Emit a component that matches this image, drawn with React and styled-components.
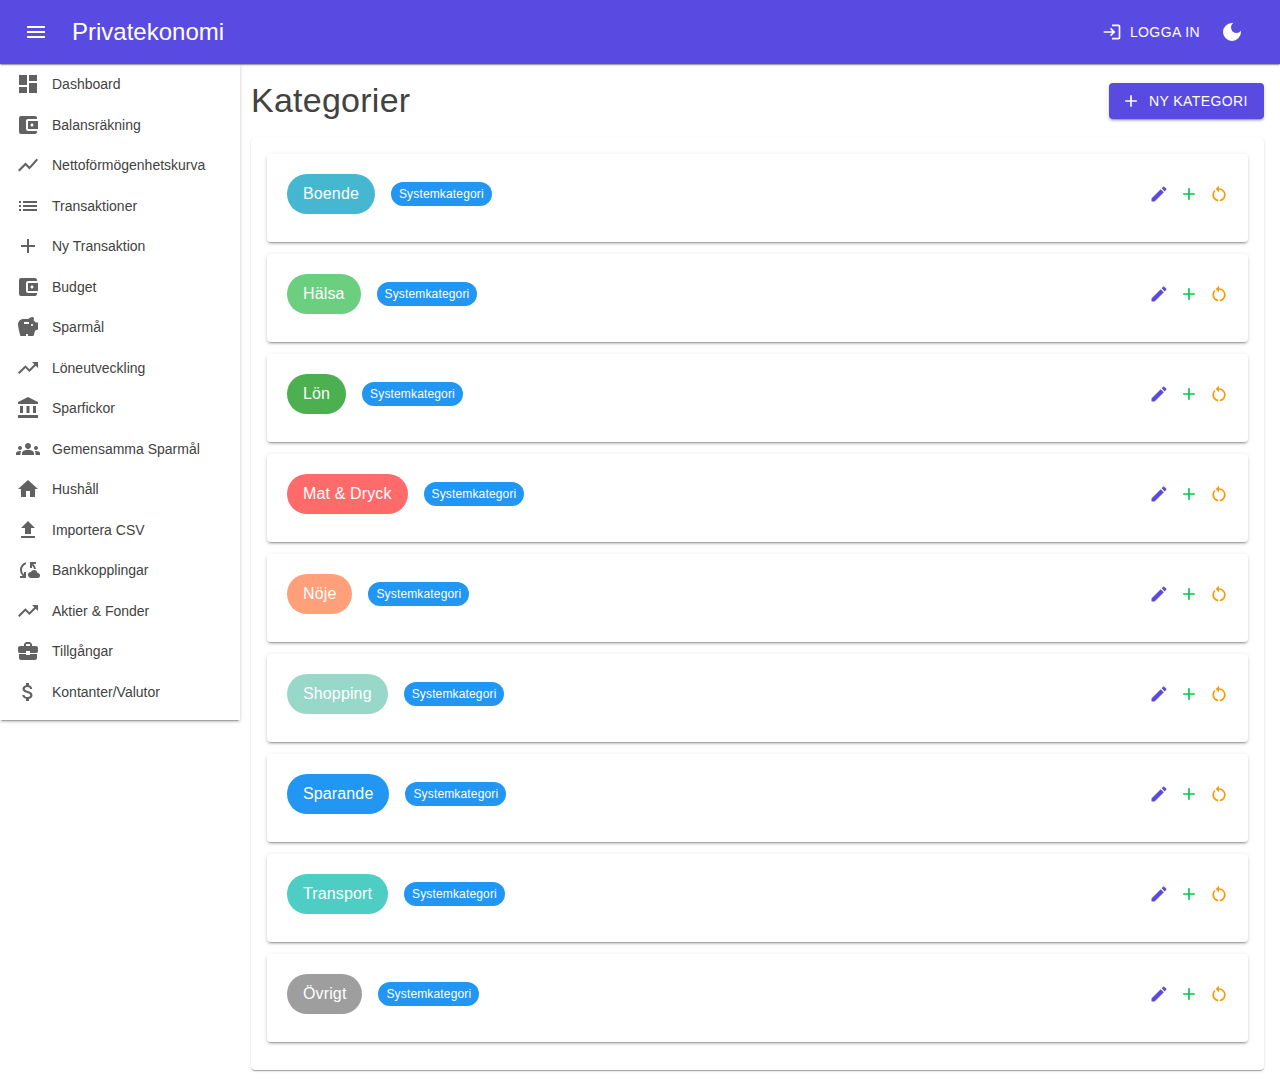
import React from "react";
import styled, { createGlobalStyle } from "styled-components";
import {
  MdMenu, MdDashboard, MdAccountBalanceWallet, MdShowChart, MdList, MdAdd, MdSavings,
  MdTrendingUp, MdAccountBalance, MdGroups, MdHome, MdFileUpload, MdCloudSync,
  MdBusinessCenter, MdAttachMoney, MdLogin, MdDarkMode, MdEdit, MdRestartAlt,
} from "react-icons/md";

const Global = createGlobalStyle`
  html, body { margin: 0; padding: 0; background: #fff; }
  body { font-family: "Liberation Sans", Arial, sans-serif; color: #424242; }
  * { box-sizing: border-box; }
`;

const AppBar = styled.header`
  position: relative;
  z-index: 5;
  height: 64px;
  background: #594ae2;
  color: #fff;
  display: flex;
  align-items: center;
  padding: 0 36px 0 24px;
  box-shadow: 0 2px 1px -1px rgba(0,0,0,.2), 0 1px 1px rgba(0,0,0,.14), 0 1px 3px rgba(0,0,0,.12);
`;
const MenuBtn = styled.span`
  display: flex;
  font-size: 24px;
  margin-right: 24px;
`;
const Brand = styled.div`
  font-size: 24px;
  line-height: 32px;
  flex: 1;
`;
const Login = styled.div`
  display: flex;
  align-items: center;
  gap: 8px;
  font-size: 14px;
  letter-spacing: .4px;
  margin-right: 20px;
`;
const Shell = styled.div`
  display: flex;
  align-items: flex-start;
`;
const Drawer = styled.nav`
  width: 240px;
  flex: none;
  padding-bottom: 8px;
  background: #fff;
  box-shadow: 0 3px 1px -2px rgba(0,0,0,.2), 0 2px 2px rgba(0,0,0,.14), 0 1px 5px rgba(0,0,0,.12);
`;
const NavItem = styled.div`
  display: flex;
  align-items: center;
  gap: 12px;
  padding: 8px 16px;
  font-size: 14px;
  line-height: 24.5px;
  color: #424242;
  svg { flex: none; font-size: 24px; color: #616161; }
`;
const Main = styled.main`
  flex: 1;
  min-width: 0;
  padding: 0 16px 16px 11px;
`;
const Head = styled.div`
  display: flex;
  align-items: flex-start;
  justify-content: space-between;
  padding-top: 19px;
  margin-bottom: 19px;
`;
const Title = styled.h1`
  margin: 0;
  font-size: 34px;
  font-weight: 400;
  line-height: 34px;
  letter-spacing: .25px;
  color: #424242;
`;
const NewBtn = styled.button`
  display: flex;
  align-items: center;
  height: 36px;
  width: 155px;
  gap: 8px;
  padding: 0 12px;
  border: 0;
  border-radius: 4px;
  background: #594ae2;
  color: #fff;
  font-family: "Liberation Sans", Arial, sans-serif;
  font-size: 14px;
  letter-spacing: .4px;
  white-space: nowrap;
  box-shadow: 0 3px 1px -2px rgba(0,0,0,.2), 0 2px 2px rgba(0,0,0,.14), 0 1px 5px rgba(0,0,0,.12);
  svg { flex: none; font-size: 20px; }
`;
const Panel = styled.section`
  display: flex;
  flex-direction: column;
  gap: 12px;
  padding: 16px 16px 28px;
  border-radius: 4px;
  background: #fff;
  box-shadow: 0 2px 1px -1px rgba(0,0,0,.2), 0 1px 1px rgba(0,0,0,.14), 0 1px 3px rgba(0,0,0,.12);
`;
const Card = styled.article`
  height: 88px;
  padding: 20px 14px 28px 20px;
  display: flex;
  align-items: center;
  border-radius: 4px;
  background: #fff;
  box-shadow: 0 3px 1px -2px rgba(0,0,0,.2), 0 2px 2px rgba(0,0,0,.14), 0 1px 5px rgba(0,0,0,.12);
`;
const NameChip = styled.span`
  height: 40px;
  padding: 0 16px;
  display: flex;
  align-items: center;
  border-radius: 20px;
  color: #fff;
  font-size: 16px;
  letter-spacing: .13px;
  background: ${(p) => p.$color};
`;
const SystemChip = styled.span`
  height: 24px;
  margin-left: 16px;
  padding: 0 8px;
  display: flex;
  align-items: center;
  border-radius: 12px;
  color: #fff;
  font-size: 12px;
  letter-spacing: .15px;
  background: #2196f3;
`;
const Actions = styled.div`
  display: flex;
  margin-left: auto;
`;
const ActionBtn = styled.span`
  width: 30px;
  height: 30px;
  display: flex;
  align-items: center;
  justify-content: center;
  font-size: 20px;
  color: ${(p) => p.$color};
`;

const nav = [
  [MdDashboard, "Dashboard"], [MdAccountBalanceWallet, "Balansräkning"],
  [MdShowChart, "Nettoförmögenhetskurva"], [MdList, "Transaktioner"],
  [MdAdd, "Ny Transaktion"], [MdAccountBalanceWallet, "Budget"], [MdSavings, "Sparmål"],
  [MdTrendingUp, "Löneutveckling"], [MdAccountBalance, "Sparfickor"],
  [MdGroups, "Gemensamma Sparmål"], [MdHome, "Hushåll"], [MdFileUpload, "Importera CSV"],
  [MdCloudSync, "Bankkopplingar"], [MdTrendingUp, "Aktier & Fonder"],
  [MdBusinessCenter, "Tillgångar"], [MdAttachMoney, "Kontanter/Valutor"],
];
const cats = [
  ["Boende", "#45b7d1"], ["Hälsa", "#6bcf7f"], ["Lön", "#4caf50"], ["Mat & Dryck", "#ff6b6b"],
  ["Nöje", "#ffa07a"], ["Shopping", "#98d8c8"], ["Sparande", "#2196f3"],
  ["Transport", "#4ecdc4"], ["Övrigt", "#9e9e9e"],
];

export default function App() {
  return (
    <>
      <Global />
      <AppBar>
        <MenuBtn><MdMenu /></MenuBtn>
        <Brand>Privatekonomi</Brand>
        <Login><MdLogin size={20} />LOGGA IN</Login>
        <MdDarkMode size={24} />
      </AppBar>
      <Shell>
        <Drawer>
          {nav.map(([Icon, label]) => (
            <NavItem key={label}><Icon />{label}</NavItem>
          ))}
        </Drawer>
        <Main>
          <Head>
            <Title>Kategorier</Title>
            <NewBtn><MdAdd />NY KATEGORI</NewBtn>
          </Head>
          <Panel>
            {cats.map(([name, color]) => (
              <Card key={name}>
                <NameChip $color={color}>{name}</NameChip>
                <SystemChip>Systemkategori</SystemChip>
                <Actions>
                  <ActionBtn $color="#594ae2"><MdEdit /></ActionBtn>
                  <ActionBtn $color="#00c853"><MdAdd /></ActionBtn>
                  <ActionBtn $color="#ff9800"><MdRestartAlt /></ActionBtn>
                </Actions>
              </Card>
            ))}
          </Panel>
        </Main>
      </Shell>
    </>
  );
}
